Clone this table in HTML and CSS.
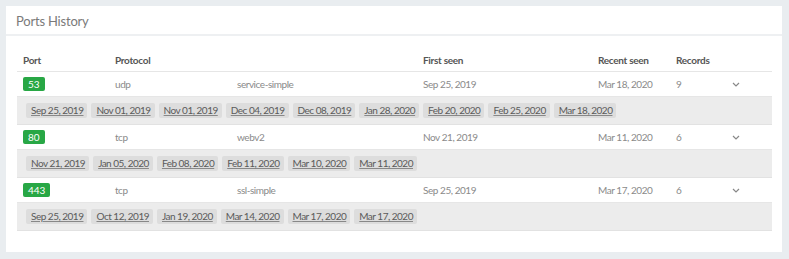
FILE: index.html
```html
<!DOCTYPE html>
<html>
<head>
<meta charset="utf-8">
<link rel="stylesheet" href="styles.css">
</head>
<body>
<div class="card">
  <div class="card-header">Ports History</div>
  <div class="card-body">
    <div class="row head">
      <div class="c">Port</div>
      <div class="c">Protocol</div>
      <div class="c"></div>
      <div class="c">First seen</div>
      <div class="c">Recent seen</div>
      <div class="c">Records</div>
      <div class="c"></div>
    </div>

    <div class="row">
      <div class="c"><span class="badge">53</span></div>
      <div class="c">udp</div>
      <div class="c">service-simple</div>
      <div class="c">Sep 25, 2019</div>
      <div class="c">Mar 18, 2020</div>
      <div class="c">9</div>
      <div class="c"><svg class="chev" width="8" height="5" viewBox="0 0 8 5"><path d="M1 1l3 3 3-3" fill="none" stroke="#888" stroke-width="1.2"/></svg></div>
    </div>
    <div class="detail">
      <span class="chip">Sep 25, 2019</span><span class="chip">Nov 01, 2019</span><span class="chip">Nov 01, 2019</span><span class="chip">Dec 04, 2019</span><span class="chip">Dec 08, 2019</span><span class="chip">Jan 28, 2020</span><span class="chip">Feb 20, 2020</span><span class="chip">Feb 25, 2020</span><span class="chip">Mar 18, 2020</span>
    </div>

    <div class="row">
      <div class="c"><span class="badge">80</span></div>
      <div class="c">tcp</div>
      <div class="c">webv2</div>
      <div class="c">Nov 21, 2019</div>
      <div class="c">Mar 11, 2020</div>
      <div class="c">6</div>
      <div class="c"><svg class="chev" width="8" height="5" viewBox="0 0 8 5"><path d="M1 1l3 3 3-3" fill="none" stroke="#888" stroke-width="1.2"/></svg></div>
    </div>
    <div class="detail">
      <span class="chip">Nov 21, 2019</span><span class="chip">Jan 05, 2020</span><span class="chip">Feb 08, 2020</span><span class="chip">Feb 11, 2020</span><span class="chip">Mar 10, 2020</span><span class="chip">Mar 11, 2020</span>
    </div>

    <div class="row">
      <div class="c"><span class="badge">443</span></div>
      <div class="c">tcp</div>
      <div class="c">ssl-simple</div>
      <div class="c">Sep 25, 2019</div>
      <div class="c">Mar 17, 2020</div>
      <div class="c">6</div>
      <div class="c"><svg class="chev" width="8" height="5" viewBox="0 0 8 5"><path d="M1 1l3 3 3-3" fill="none" stroke="#888" stroke-width="1.2"/></svg></div>
    </div>
    <div class="detail">
      <span class="chip">Sep 25, 2019</span><span class="chip">Oct 12, 2019</span><span class="chip">Jan 19, 2020</span><span class="chip">Mar 14, 2020</span><span class="chip">Mar 17, 2020</span><span class="chip">Mar 17, 2020</span>
    </div>
  </div>
</div>
</body>
</html>
```

FILE: styles.css
```css
html, body {
  margin: 0;
  padding: 0;
  background: #e9edf0;
}
body {
  padding: 6px 7px 7px 6px;
  font-family: Lato, "Liberation Sans", sans-serif;
  font-size: 10px;
  letter-spacing: -0.45px;
  color: #8a8a8a;
}
.card {
  background: #fff;
  height: 246px;
  box-sizing: border-box;
}
.card-header {
  height: 30px;
  box-sizing: border-box;
  padding: 7px 0 0 10px;
  font-size: 13px;
  letter-spacing: -0.2px;
  color: #7a7a7a;
  border-bottom: 2px solid #eef0f2;
}
.card-body {
  padding: 12px 10px 0 11px;
}
.row {
  display: grid;
  grid-template-columns: 92px 122px 186px 175px 78px 56px 46px;
  align-items: center;
  height: 24px;
  border-bottom: 1px solid #e6e6e6;
}
.row .c {
  padding-left: 6px;
  white-space: nowrap;
}
.row.head {
  height: 23px;
  color: #555;
  font-weight: 700;
  letter-spacing: -0.3px;
}
.row .c:last-child {
  display: flex;
  align-items: center;
}
.badge {
  display: inline-block;
  background: #28a745;
  color: #fff;
  border-radius: 2px;
  padding: 0 5px;
  line-height: 14px;
  font-size: 10px;
  letter-spacing: 0;
}
.detail {
  background: #ececec;
  height: 28px;
  box-sizing: border-box;
  padding: 6px 0 0 9px;
  display: flex;
  gap: 4px;
  border-bottom: 1px solid #e2e2e2;
}
.chip {
  background: #dddddd;
  color: #5a5a5a;
  letter-spacing: -0.5px;
  text-decoration: underline;
  text-decoration-color: #888;
  padding: 0 4px 0 5px;
  line-height: 15px;
  height: 15px;
  border-radius: 2px;
}
```
